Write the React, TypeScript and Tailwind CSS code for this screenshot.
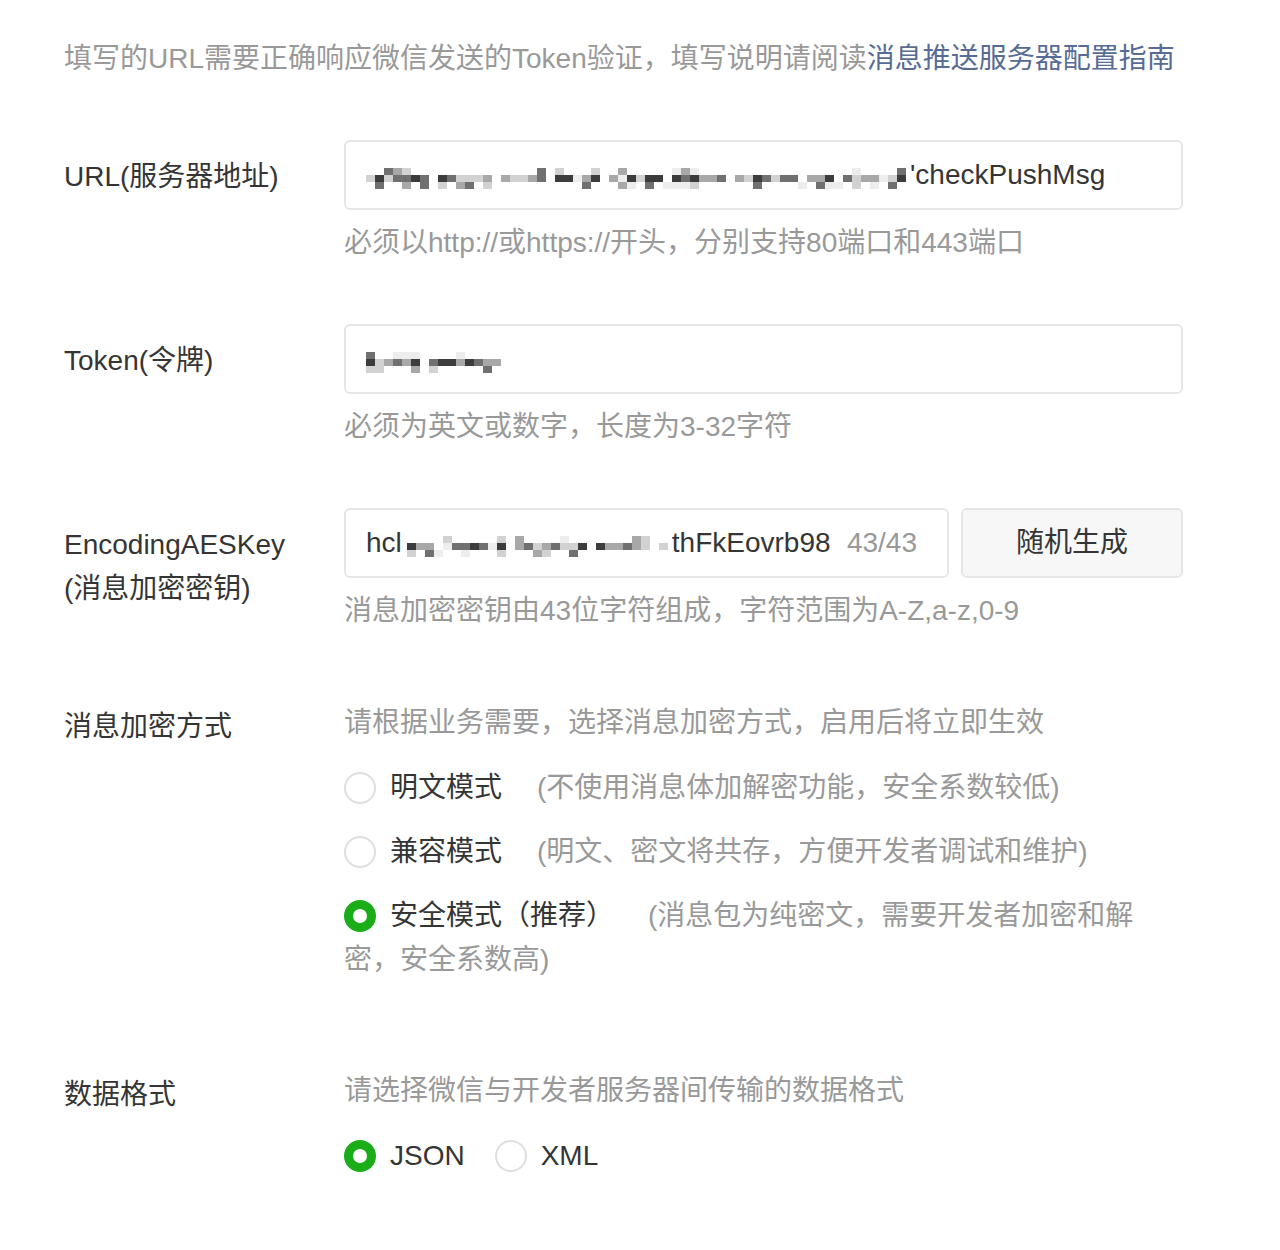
import clsx from "clsx";

const SHADES = [
  "bg-transparent",
  "bg-[#ededed]",
  "bg-[#d2d2d2]",
  "bg-[#a8a8a8]",
  "bg-[#707070]",
  "bg-[#3c3c3c]",
];

function makeCells(cols: number, seed: number) {
  let s = seed;
  const rnd = () => {
    s = (s * 1103515245 + 12345) % 2147483648;
    return s / 2147483648;
  };
  const cells: number[] = [];
  let run = 0;
  for (let c = 0; c < cols; c++) {
    // small gaps between "words"
    if (run <= 0) {
      run = 3 + Math.floor(rnd() * 6);
      if (c > 0) {
        cells.push(0, 0, rnd() < 0.3 ? 1 : 0);
        continue;
      }
    }
    run--;
    const top = rnd() < 0.35 ? 1 + Math.floor(rnd() * 4) : 0;
    const mid = rnd() < 0.08 ? 1 : 2 + Math.floor(rnd() * 4);
    const bottom = rnd() < 0.3 ? 1 + Math.floor(rnd() * 4) : 0;
    cells.push(top, mid, bottom);
  }
  return cells;
}

// pixelated (redacted) part of a value
function Mosaic({ cols, seed, className }: { cols: number; seed: number; className?: string }) {
  const cells = makeCells(cols, seed);
  return (
    <span
      className={clsx(
        "inline-grid shrink-0 grid-flow-col auto-cols-[9px] grid-rows-[repeat(3,7px)] translate-y-[3px]",
        className
      )}
    >
      {cells.map((v, i) => (
        <span key={i} className={SHADES[v]} />
      ))}
    </span>
  );
}

function Radio({ checked }: { checked?: boolean }) {
  return (
    <span
      className={clsx(
        "relative -top-[2px] mr-[14px] inline-block h-[32px] w-[32px] rounded-full align-middle",
        checked ? "border-[9px] border-[#1aad19] bg-white" : "border-2 border-[#dedede] bg-white"
      )}
    />
  );
}

function Field({ label, children }: { label: React.ReactNode; children: React.ReactNode }) {
  return (
    <div className="flex">
      <div className="w-[280px] shrink-0 pt-[15px] text-[#353535]">{label}</div>
      <div className="w-[839px]">{children}</div>
    </div>
  );
}

const inputBox = "flex h-[70px] items-center rounded-[6px] border-2 border-[#e6e6e6] bg-white px-[20px] text-[#353535]";

export default function App() {
  return (
    <div className="min-h-[1250px] bg-white pl-[64px] pt-[37px] font-['Liberation_Sans','Noto_Sans_CJK_SC',sans-serif] text-[28px] leading-[44px]">
      <p className="text-[#999]">
        填写的URL需要正确响应微信发送的Token验证，填写说明请阅读
        <a className="text-[#576b95]">消息推送服务器配置指南</a>
      </p>

      <div className="mt-[59px] flex flex-col gap-[59px]">
        <Field label="URL(服务器地址)">
          <div className={inputBox}>
            <Mosaic cols={60} seed={17} />
            <span className="ml-[4px]">'checkPushMsg</span>
          </div>
          <p className="mt-[11px] text-[#999]">必须以http://或https://开头，分别支持80端口和443端口</p>
        </Field>

        <Field label="Token(令牌)">
          <div className={inputBox}>
            <Mosaic cols={16} seed={5} />
          </div>
          <p className="mt-[11px] text-[#999]">必须为英文或数字，长度为3-32字符</p>
        </Field>

        <Field
          label={
            <>
              EncodingAESKey
              <br />
              (消息加密密钥)
            </>
          }
        >
          <div className="flex gap-[12px]">
            <div className={clsx(inputBox, "w-[605px] pr-[30px]")}>
              <span>hcl</span>
              <Mosaic cols={29} seed={41} className="ml-[5px]" />
              <span className="ml-[4px] w-[158px] overflow-hidden whitespace-nowrap">thFkEovrb98</span>
              <span className="ml-auto text-[#999]">43/43</span>
            </div>
            <button className="h-[70px] flex-1 rounded-[6px] border-2 border-[#e6e6e6] bg-[#f7f7f7] text-[#353535]">
              随机生成
            </button>
          </div>
          <p className="mt-[11px] text-[#999]">消息加密密钥由43位字符组成，字符范围为A-Z,a-z,0-9</p>
        </Field>
      </div>

      <div className="mt-[68px] flex">
        <div className="w-[280px] shrink-0 pt-[4px] text-[#353535]">消息加密方式</div>
        <div className="w-[800px]">
          <p className="text-[#999]">请根据业务需要，选择消息加密方式，启用后将立即生效</p>
          <div className="mt-[21px] flex flex-col gap-[20px] text-[#353535]">
            <div>
              <Radio />
              明文模式
              <span className="ml-[35px] text-[#999]">(不使用消息体加解密功能，安全系数较低)</span>
            </div>
            <div>
              <Radio />
              兼容模式
              <span className="ml-[35px] text-[#999]">(明文、密文将共存，方便开发者调试和维护)</span>
            </div>
            <div>
              <Radio checked />
              安全模式（推荐）
              <span className="ml-[34px] text-[#999]">(消息包为纯密文，需要开发者加密和解密，安全系数高)</span>
            </div>
          </div>
        </div>
      </div>

      <div className="mt-[87px] flex">
        <div className="w-[280px] shrink-0 pt-[4px] text-[#353535]">数据格式</div>
        <div>
          <p className="text-[#999]">请选择微信与开发者服务器间传输的数据格式</p>
          <div className="mt-[21px] flex gap-[30px] text-[#353535]">
            <div>
              <Radio checked />
              JSON
            </div>
            <div>
              <Radio />
              XML
            </div>
          </div>
        </div>
      </div>
    </div>
  );
}
